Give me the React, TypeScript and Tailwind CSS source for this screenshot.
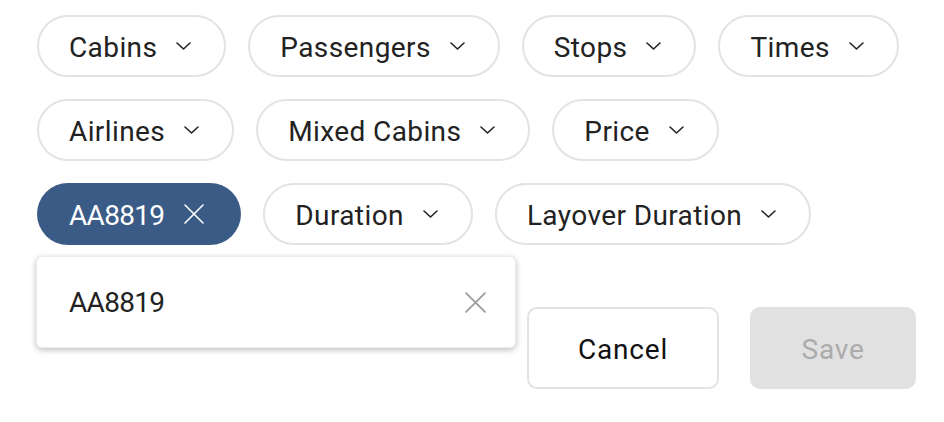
import * as React from 'react';

const font = { fontFamily: 'Roboto, "Liberation Sans", sans-serif' };

function Chevron() {
  return (
    <svg width="15" height="8" viewBox="0 0 15 8" fill="none" className="shrink-0">
      <path d="M1 1l6.5 6L14 1" stroke="#222" strokeWidth="1.6" strokeLinecap="round" strokeLinejoin="round" />
    </svg>
  );
}

function Cross({ color, size = 20 }: { color: string; size?: number }) {
  return (
    <svg width={size} height={size} viewBox="0 0 20 20" fill="none" className="shrink-0">
      <path d="M1 1l18 18M19 1L1 19" stroke={color} strokeWidth="1.6" strokeLinecap="round" />
    </svg>
  );
}

function FilterPill({ label }: { label: string }) {
  return (
    <button className="flex h-[62px] items-center gap-[19px] rounded-full border-2 border-[#e3e3e3] bg-white pl-[30px] pr-[33px] text-[28px] tracking-[0.4px] text-[#222]">
      <span className="pt-[3px]">{label}</span>
      <Chevron />
    </button>
  );
}

function ActivePill({ label }: { label: string }) {
  return (
    <button className="flex h-[62px] items-center gap-[20px] rounded-full bg-[#3b5b87] pl-[32px] pr-[37px] text-[28px] tracking-[-0.7px] text-white">
      <span className="pt-[3px]">{label}</span>
      <Cross color="#ffffff" />
    </button>
  );
}

export default function App() {
  return (
    <div className="relative h-[422px] w-[944px] overflow-hidden bg-white" style={font}>
      <div className="flex flex-col gap-[22px] pl-[37px] pt-[15px]">
        <div className="flex gap-[22px]">
          <FilterPill label="Cabins" />
          <FilterPill label="Passengers" />
          <FilterPill label="Stops" />
          <FilterPill label="Times" />
        </div>
        <div className="flex gap-[22px]">
          <FilterPill label="Airlines" />
          <FilterPill label="Mixed Cabins" />
          <FilterPill label="Price" />
        </div>
        <div className="flex gap-[22px]">
          <ActivePill label="AA8819" />
          <FilterPill label="Duration" />
          <FilterPill label="Layover Duration" />
        </div>
      </div>

      {/* Action buttons */}
      <div className="flex justify-end gap-[31px] pr-[28px] pt-[62px]">
        <button className="flex h-[82px] w-[192px] items-center justify-center rounded-[10px] border-2 border-[#e3e3e3] bg-white pt-[4px] text-[28px] tracking-[0.8px] text-[#111]">
          Cancel
        </button>
        <button className="flex h-[82px] w-[166px] items-center justify-center rounded-[10px] bg-[#e1e1e1] pt-[4px] text-[28px] tracking-[0.8px] text-[#ababab]">
          Save
        </button>
      </div>

      {/* Popover under the active pill */}
      <div className="absolute left-[36px] top-[256px] flex h-[92px] w-[480px] items-center justify-between rounded-[6px] border border-[#ececec] bg-white pl-[32px] pr-[29px] shadow-[0_2px_6px_rgba(0,0,0,0.25)]">
        <span className="pt-[2px] text-[28px] tracking-[-0.7px] text-[#222]">AA8819</span>
        <Cross color="#9a9a9a" size={21} />
      </div>
    </div>
  );
}
